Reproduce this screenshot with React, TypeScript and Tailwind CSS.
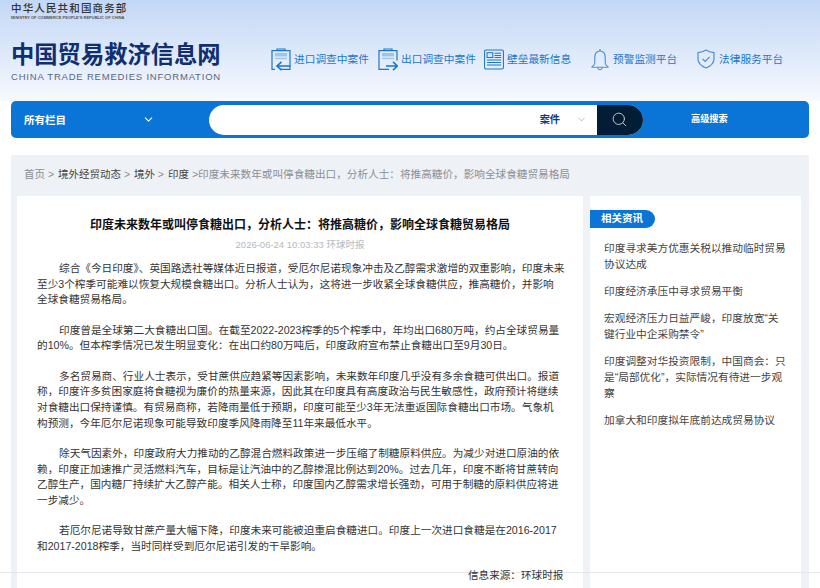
import { Fragment } from 'react';
import { ChevronDown, Search } from 'lucide-react';

const fontStack = "font-['Liberation_Sans','Noto_Sans_CJK_SC',sans-serif]";

function ImportIcon({ out }: { out?: boolean }) {
  return (
    <svg width="20" height="23" viewBox="0 0 20 23" fill="none" stroke="#1a78c8" strokeWidth="1.2">
      <path d={out ? 'M11 21.4H1V2.6h18v10' : 'M10 21.4h9V2.6H1v18.8h3'} />
      <path d="M6 2.6V1h8v1.6" />
      <rect x="4" y="5" width="12" height="3.4" fill="#9fc4ea" stroke="none" />
      <path d="M4 10.5h12" stroke="#9fc4ea" strokeWidth="1.4" />
      {out ? (
        <path d="M8 18h11M15 13.8 19.4 18 15 22.2" strokeWidth="1.6" />
      ) : (
        <path d="M19.5 18H6M10.5 13.8 6 18l4.5 4.2" strokeWidth="1.6" />
      )}
    </svg>
  );
}

function NewsIcon() {
  return (
    <svg width="21" height="21" viewBox="0 0 21 21" fill="none" stroke="#1a78c8" strokeWidth="1.1">
      <rect x="0.6" y="0.6" width="19.8" height="19.8" rx="1.5" />
      <rect x="3.2" y="3.4" width="6" height="5" />
      <path d="M11 4h7M11 6.2h7M11 8.4h7M3.2 11h14.8M3.2 13.6h14.8M3.2 16.2h14.8" />
    </svg>
  );
}

function BellIcon() {
  return (
    <svg width="18" height="23" viewBox="0 0 18 23" fill="none" stroke="#4d8fd0" strokeWidth="1.1">
      <path d="M9 3C5.2 3 3.8 6 3.8 9.5v5.2c0 1.6-1.1 3-2.8 4v.6h16v-.6c-1.7-1-2.8-2.4-2.8-4V9.5C14.2 6 12.8 3 9 3Z" />
      <path d="M9 3V1M6.5 19.5c.3 1.4 1.3 2.2 2.5 2.2s2.2-.8 2.5-2.2" />
    </svg>
  );
}

function ShieldIcon() {
  return (
    <svg width="18" height="20" viewBox="0 0 18 20" fill="none" stroke="#4d8fd0" strokeWidth="1.2">
      <path d="M9 1c2.4 1.6 5 2.4 8 2.6v6.2c0 4.2-3.2 7.4-8 9.2-4.8-1.8-8-5-8-9.2V3.6C4 3.4 6.6 2.6 9 1Z" />
      <path d="M5.6 10 8.2 12.4 12.6 7.8" />
    </svg>
  );
}

const navItems = [
  { icon: <ImportIcon />, label: '进口调查中案件', width: 'w-[107px]' },
  { icon: <ImportIcon out />, label: '出口调查中案件', width: 'w-[106px]' },
  { icon: <NewsIcon />, label: '壁垒最新信息', width: 'w-[106px]' },
  { icon: <BellIcon />, label: '预警监测平台', width: 'w-[106px]' },
  { icon: <ShieldIcon />, label: '法律服务平台', width: 'w-[90px]' },
];

const related = [
  '印度寻求美方优惠关税以推动临时贸易协议达成',
  '印度经济承压中寻求贸易平衡',
  '宏观经济压力日益严峻，印度放宽“关键行业中企采购禁令”',
  '印度调整对华投资限制，中国商会：只是“局部优化”，实际情况有待进一步观察',
  '加拿大和印度拟年底前达成贸易协议',
];

// line ends follow the reference, the fallback CJK font wraps differently
const paragraphs = [
  [
    '综合《今日印度》、英国路透社等媒体近日报道，受厄尔尼诺现象冲击及乙醇需求激增的双重影响，印度未来',
    '至少3个榨季可能难以恢复大规模食糖出口。分析人士认为，这将进一步收紧全球食糖供应，推高糖价，并影响',
    '全球食糖贸易格局。',
  ],
  [
    '印度曾是全球第二大食糖出口国。在截至2022-2023榨季的5个榨季中，年均出口680万吨，约占全球贸易量',
    '的10%。但本榨季情况已发生明显变化：在出口约80万吨后，印度政府宣布禁止食糖出口至9月30日。',
  ],
  [
    '多名贸易商、行业人士表示，受甘蔗供应趋紧等因素影响，未来数年印度几乎没有多余食糖可供出口。报道',
    '称，印度许多贫困家庭将食糖视为廉价的热量来源，因此其在印度具有高度政治与民生敏感性，政府预计将继续',
    '对食糖出口保持谨慎。有贸易商称，若降雨量低于预期，印度可能至少3年无法重返国际食糖出口市场。气象机',
    '构预测，今年厄尔尼诺现象可能导致印度季风降雨降至11年来最低水平。',
  ],
  [
    '除天气因素外，印度政府大力推动的乙醇混合燃料政策进一步压缩了制糖原料供应。为减少对进口原油的依',
    '赖，印度正加速推广灵活燃料汽车，目标是让汽油中的乙醇掺混比例达到20%。过去几年，印度不断将甘蔗转向',
    '乙醇生产，国内糖厂持续扩大乙醇产能。相关人士称，印度国内乙醇需求增长强劲，可用于制糖的原料供应将进',
    '一步减少。',
  ],
  [
    '若厄尔尼诺导致甘蔗产量大幅下降，印度未来可能被迫重启食糖进口。印度上一次进口食糖是在2016-2017',
    '和2017-2018榨季，当时同样受到厄尔尼诺引发的干旱影响。',
  ],
];

export default function App() {
  return (
    <div className={`relative h-[588px] w-[820px] overflow-hidden bg-white ${fontStack}`}>
      {/* Header */}
      <div className="h-[101px] bg-gradient-to-b from-[#c3d7f6] to-[#f7f9fe] px-[11px]">
        <div className="h-[40px] pt-[2px]">
          <div className="text-[10.5px] leading-[13px] tracking-[1.15px] font-medium text-[#333]">中华人民共和国商务部</div>
          <div className="text-[4px] leading-[5px] font-bold whitespace-nowrap text-[#555]">MINISTRY OF COMMERCE PEOPLE'S REPUBLIC OF CHINA</div>
        </div>
        <div className="flex">
          <div className="w-[260px]">
            <div className="text-[23.3px] leading-[30px] font-bold text-[#0f2f6e]">中国贸易救济信息网</div>
            <div className="text-[9.5px] leading-[14px] tracking-[0.8px] whitespace-nowrap text-[#56677f]">CHINA TRADE REMEDIES INFORMATION</div>
          </div>
          <div className="mt-[4px] flex h-[30px] items-center">
            {navItems.map((item) => (
              <div key={item.label} className={`flex items-center gap-[3px] ${item.width}`}>
                <span className="flex w-[20px] shrink-0 justify-center">{item.icon}</span>
                <span className="text-[10.7px] whitespace-nowrap text-[#1a78c8]">{item.label}</span>
              </div>
            ))}
          </div>
        </div>
      </div>

      {/* Search bar */}
      <div className="mx-[11px] flex h-[37px] items-center rounded-[5px] bg-[#0a75d6] pl-[13px]">
        <span className="pt-[2px] text-[10.5px] font-bold text-white">所有栏目</span>
        <ChevronDown className="ml-[76px] text-white" size={13} strokeWidth={2} />
        <div className="ml-[54px] flex h-[30px] w-[434px] overflow-hidden rounded-full bg-white">
          <div className="flex flex-1 items-center justify-end pr-[10px]">
            <span className="pt-[1px] text-[10.2px] font-bold text-[#123a78]">案件</span>
            <ChevronDown className="ml-[16px] text-[#8a97a8]" size={11} strokeWidth={1.5} />
          </div>
          <div className="flex w-[46px] items-center justify-center bg-[#041d36] pr-[2px]">
            <Search className="text-[#c8d0d8]" size={17} strokeWidth={1.3} />
          </div>
        </div>
        <span className="ml-[48px] pt-[1px] text-[9.2px] font-bold text-white">高级搜索</span>
      </div>

      {/* Content */}
      <div className="mx-[11px] mt-[17px] h-[500px] bg-[#eef1f5] px-[6px]">
        <div className="flex h-[41px] items-center pb-[1px] pl-[7px] text-[10.5px] whitespace-nowrap text-[#8a8f96]">
          <span>首页 &gt;&nbsp;</span>
          <span className="ml-[1px] text-[#444]">境外经贸动态</span>
          <span>&nbsp;&gt;&nbsp;</span>
          <span className="ml-[1px] text-[#444]">境外</span>
          <span>&nbsp;&gt;&nbsp;</span>
          <span className="ml-[1px] text-[#444]">印度</span>
          <span className="ml-[3px] text-[10.64px]">&gt;印度未来数年或叫停食糖出口，分析人士：将推高糖价，影响全球食糖贸易格局</span>
        </div>
        <div className="flex gap-[7px]">
          <div className="h-[460px] w-[566px] bg-white px-[20px] pt-[20px]">
            <h1 className="text-center text-[12px] leading-[18px] font-bold text-[#111]">
              印度未来数年或叫停食糖出口，分析人士：将推高糖价，影响全球食糖贸易格局
            </h1>
            <div className="mt-[3px] text-center text-[9.5px] leading-[16px] text-[#b5b9bf]">2026-06-24 10:03:33 环球时报</div>
            <div className="mt-[8px] flex flex-col gap-[14.55px]">
              {paragraphs.map((lines) => (
                <p key={lines[0]} className="indent-[22px] text-[10.65px] leading-[15.7px] whitespace-nowrap text-[#333]">
                  {lines.map((line, i) => (
                    <Fragment key={line}>
                      {i > 0 && <br />}
                      {line}
                    </Fragment>
                  ))}
                </p>
              ))}
            </div>
          </div>
          <div className="h-[460px] w-[211px] bg-white pt-[14px]">
            <div className="flex h-[18px] w-[65px] items-center rounded-r-full bg-[#0a75d6] pl-[11px] text-[10.5px] font-bold text-white">相关资讯</div>
            <div className="mt-[12px] flex flex-col gap-[11px] pr-[13px] pl-[14px]">
              {related.map((r) => (
                <div key={r} className="text-[10.7px] leading-[16px] text-[#444]">{r}</div>
              ))}
            </div>
          </div>
        </div>
      </div>

      {/* Footer rule and source line sit over the cards */}
      <div className="absolute top-[572px] right-0 left-0 h-px bg-[#e4e7eb]" />
      <div className="absolute top-[567px] left-[468px] text-[10.6px] leading-[16px] whitespace-nowrap text-[#333]">信息来源：环球时报</div>
    </div>
  );
}
